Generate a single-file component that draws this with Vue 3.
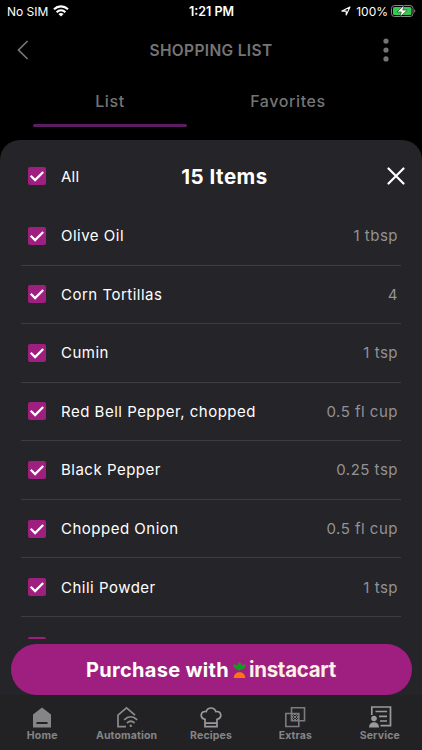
<script setup>
import { ref, computed } from 'vue'

const items = ref([
  { name: 'Olive Oil', amount: '1 tbsp', checked: true },
  { name: 'Corn Tortillas', amount: '4', checked: true },
  { name: 'Cumin', amount: '1 tsp', checked: true },
  { name: 'Red Bell Pepper, chopped', amount: '0.5 fl cup', checked: true },
  { name: 'Black Pepper', amount: '0.25 tsp', checked: true },
  { name: 'Chopped Onion', amount: '0.5 fl cup', checked: true },
  { name: 'Chili Powder', amount: '1 tsp', checked: true },
  { name: '', amount: '', checked: true },
])
const total = 15
const allChecked = computed(() => items.value.every((item) => item.checked))

function toggleAll() {
  const next = !allChecked.value
  items.value.forEach((item) => { item.checked = next })
}
</script>

<template>
  <div class="phone">
    <div class="status">
      <div class="carrier">
        <span>No SIM</span>
        <svg width="16" height="12" viewBox="0 0 16 12" fill="none" stroke="#fff" stroke-width="2.2">
          <path d="M1 4.3C5 .5 11 .5 15 4.3" />
          <path d="M3.6 7.2C6.2 4.8 9.8 4.8 12.4 7.2" />
          <path d="M8 11.6 5.4 9C7 7.7 9 7.7 10.6 9Z" fill="#fff" stroke="none" />
        </svg>
      </div>
      <span class="clock">1:21 PM</span>
      <div class="power">
        <svg width="10" height="10" viewBox="0 0 10 10" fill="none" stroke="#fff" stroke-width="1.1" stroke-linejoin="round">
          <path d="M.9 5.1 9 1 5.2 9V5.1Z" />
        </svg>
        <span>100%</span>
        <svg class="battery" width="25" height="12" viewBox="0 0 25 12">
          <rect x=".5" y=".5" width="21.5" height="11" rx="3" fill="none" stroke="#858585" />
          <rect x="2" y="2" width="18.5" height="8" rx="1.6" fill="#34c94f" />
          <path d="M23.2 4.2c1.5.6 1.5 3 0 3.6Z" fill="#858585" />
          <path d="M13 .2 6 6.9h4.3L9.2 11.8l7-6.7h-4.4Z" fill="#fff" stroke="#111" stroke-width=".5" />
        </svg>
      </div>
    </div>

    <header class="top">
      <svg width="12" height="20" viewBox="0 0 12 20" fill="none" stroke="#777" stroke-width="1.7"><path d="M10.6 1 1.5 10l9.1 9" /></svg>
      <h1>SHOPPING LIST</h1>
      <svg width="6" height="24" viewBox="0 0 6 24" fill="#757575"><circle cx="3" cy="3.1" r="2.6" /><circle cx="3" cy="12" r="2.6" /><circle cx="3" cy="20.9" r="2.6" /></svg>
    </header>

    <nav class="tabs">
      <a class="tab active">List</a>
      <a class="tab">Favorites</a>
    </nav>

    <section class="sheet">
      <div class="sheet-head">
        <button class="box" :class="{ on: allChecked }" @click="toggleAll">
          <svg v-if="allChecked" viewBox="0 0 18 18"><path d="m2.7 8.8 4.4 4.3 8.1-8.2" /></svg>
        </button>
        <span class="all">All</span>
        <h2>{{ total }} Items</h2>
        <svg class="close" width="18" height="18" viewBox="0 0 18 18"><path d="m1.5 1.5 15 15M16.5 1.5l-15 15" /></svg>
      </div>
      <ul class="list">
        <li v-for="(item, index) in items" :key="index" class="row">
          <button class="box" :class="{ on: item.checked }" @click="item.checked = !item.checked">
            <svg v-if="item.checked" viewBox="0 0 18 18"><path d="m2.7 8.8 4.4 4.3 8.1-8.2" /></svg>
          </button>
          <span class="name">{{ item.name }}</span>
          <span class="amount">{{ item.amount }}</span>
        </li>
      </ul>
      <div class="cta-wrap">
        <button class="cta">
          <span class="cta-text">Purchase with</span>
          <!-- carrot -->
          <svg width="13" height="16" viewBox="0 0 13 16">
            <path d="M6.5 0C8.5 1.4 8.8 3 8.2 4.2 9.6 2.4 11.4 2.2 13 3 12 6.4 9.8 7.8 7.8 7.4L6.5 9.4 5.2 7.4C3.2 7.8 1 6.4 0 3c1.6-.8 3.4-.6 4.8 1.2C4.200 3 4.500 1.400 6.5 0Z" fill="#159a22" />
            <path d="M.8 16c0-7.600 11.400-7.600 11.400 0Z" fill="#ff7314" />
          </svg>
          <span class="brand">instacart</span>
        </button>
      </div>
    </section>

    <footer class="bar">
      <a class="link">
        <svg width="22" height="22" viewBox="0 0 22 22"><path d="M2 21.5V8.5L11 1.5l9 7v13Z" fill="#858587" /><rect x="5.5" y="16" width="11" height="2" fill="#222224" /></svg>
        <span>Home</span>
      </a>
      <a class="link">
        <svg width="22" height="22" viewBox="0 0 22 22" fill="none" stroke="#8c8c8e" stroke-width="1.7">
          <path d="M10 20.7H2V9.2l8.5-7.4L19 9.2" />
          <path d="M8.2 13.8c4-3.8 9-3.8 13 0M11 17c2.4-2.2 5.2-2.2 7.6 0" />
          <circle cx="14.8" cy="19.8" r="1.2" fill="#8c8c8e" stroke="none" />
        </svg>
        <span>Automation</span>
      </a>
      <a class="link">
        <svg width="22" height="22" viewBox="0 0 22 22" fill="none" stroke="#9a9a9c" stroke-width="1.7">
          <path d="M5 20.7v-7.3C-1 11.5.8 4.5 6.2 5.6 7.8.8 14.2.8 15.8 5.6c5.4-1.1 7.2 5.9 1.2 7.8v7.3ZM5 17.2h12" />
        </svg>
        <span>Recipes</span>
      </a>
      <a class="link">
        <svg width="22" height="22" viewBox="0 0 22 22" fill="none" stroke="#7c7c7e" stroke-width="1.6">
          <path d="M7.5 1.8h13v13h-13ZM1.8 7.5h13v13h-13Z" />
          <path d="m8 11 3-3M8 14l6-6M11 14l3-3M8 11l3 3M8 8l6 6M11 8l3 3" stroke-width="1" />
        </svg>
        <span>Extras</span>
      </a>
      <a class="link">
        <svg width="24" height="22" viewBox="0 0 24 22" fill="none" stroke="#9a9a9c" stroke-width="1.7">
          <path d="M3.8 9V1h18.7v18.7h-10M7.5 5.5H19M11 10.3h8M12 15h7" />
          <circle cx="6" cy="12.5" r="2.8" fill="#9a9a9c" stroke="none" />
          <path d="M1 21.5c0-7 10-7 10 0Z" fill="#9a9a9c" stroke="none" />
        </svg>
        <span>Service</span>
      </a>
    </footer>
  </div>
</template>

<style>
body { margin: 0; background: #000; }
</style>

<style scoped>
.phone { width: 422px; height: 750px; display: flex; flex-direction: column; overflow: hidden; background: #000; color: #fff; font-family: Inter, 'Liberation Sans', sans-serif; }
h1, h2, ul { margin: 0; padding: 0; }
button { border: 0; padding: 0; font-family: inherit; color: inherit; }
svg { display: block; flex: none; }
.status { height: 22px; display: grid; grid-template-columns: 1fr auto 1fr; align-items: center; padding: 0 6px 0 7px; font-size: 12px; }
.carrier, .power { display: flex; align-items: center; gap: 5px; }
.power { justify-content: flex-end; }
.battery { margin-left: -2px; }
.clock { font-size: 12.5px; font-weight: 600; }
.top { height: 56px; display: grid; grid-template-columns: 22px 1fr 6px; align-items: center; padding: 0 33px 0 17px; }
.top h1 { color: #757575; font-size: 15.5px; font-weight: 600; letter-spacing: .35px; text-align: center; }
.tabs { height: 62px; box-sizing: border-box; padding: 0 33px; display: grid; grid-template-columns: 154px 154px; gap: 24px; }
.tab { height: 49px; box-sizing: border-box; text-align: center; color: #757575; font-size: 16px; font-weight: 500; line-height: 47px; letter-spacing: .6px; }
.tab.active::after { content: ''; display: block; height: 3px; margin-top: -1px; border-radius: 2px; background: #5d1d62; }
.sheet { height: 555px; flex: none; display: flex; flex-direction: column; background: #252428; border-radius: 20px 20px 0 0; }
.sheet-head { height: 67px; flex: none; box-sizing: border-box; padding: 5px 17px 0 28px; display: grid; grid-template-columns: 33px 90px 1fr 107px; align-items: center; }
.sheet-head h2 { text-align: center; font-size: 20.5px; font-weight: 700; letter-spacing: .5px; }
.all { font-size: 15px; letter-spacing: .2px; }
.close { justify-self: end; stroke: #fff; stroke-width: 2.2; stroke-linecap: round; }
.box { width: 18px; height: 18px; flex: none; border-radius: 2px; background: #3a393d; }
.box.on { background: #9f1f80; }
.box path { fill: none; stroke: #fff; stroke-width: 2.2; }
.list { flex: 1; min-height: 0; overflow: hidden; list-style: none; padding: 0 21px; }
.row { height: 58.55px; box-sizing: border-box; display: flex; align-items: center; padding: 0 3px 0 7px; border-bottom: 1px solid #3d3c40; font-size: 15px; letter-spacing: .5px; }
.name { margin-left: 15px; }
.amount { margin-left: auto; color: #939295; }
.cta-wrap { flex: none; padding: 5px 10.5px 0; }
.cta { width: 100%; height: 51px; border-radius: 26px; background: #9f1f80; display: flex; align-items: center; justify-content: center; }
.cta-text { font-size: 20px; font-weight: 700; letter-spacing: .3px; margin-right: 4px; }
.brand { margin-left: 3px; color: #fff0e5; font-size: 20.5px; font-weight: 700; letter-spacing: -.3px; }
.bar { height: 55px; flex: none; display: grid; grid-template-columns: repeat(5, 1fr); background: #222224; color: #858587; font-size: 10.5px; font-weight: 700; letter-spacing: .15px; }
.link { display: flex; flex-direction: column; align-items: center; padding-top: 11px; gap: 1px; }
</style>
